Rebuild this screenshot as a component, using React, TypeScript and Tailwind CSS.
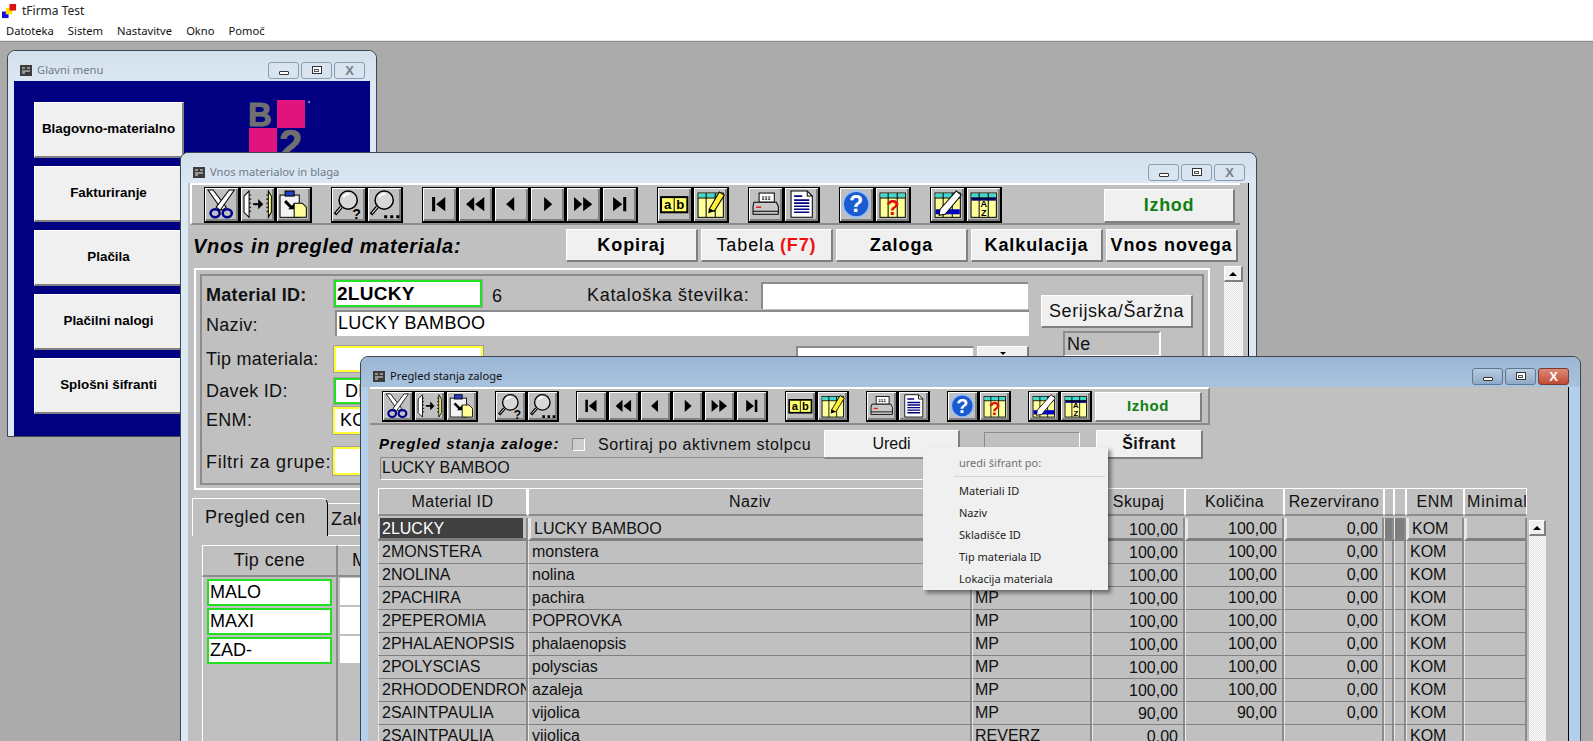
import type { ReactNode } from 'react';

const raised =
  'border-t border-l border-r-2 border-b-2 border-t-white border-l-white border-r-[#7f7f7f] border-b-[#7f7f7f] bg-[#f0f0f0]';
const track =
  'bg-[repeating-conic-gradient(#ffffff_0_25%,#e0e0e0_0_50%)] bg-[length:2px_2px]';

const Grid = ({ header = '#40d8d0', sub = false }: { header?: string; sub?: boolean }) => (
  <>
    <rect x="3" y="4" width="25" height="24" fill="#ffff99" stroke="#000" />
    <rect x="3.5" y="4.5" width="24" height="4" fill={header} />
    {sub && <rect x="3.5" y="8.5" width="24" height="3" fill="#000080" />}
    <path d="M3 9H28M11 4V28M20 4V28" stroke="#000" fill="none" />
  </>
);

const Icons: Record<string, ReactNode> = {
  cut: (
    <>
      <polygon points="2,1 7,1 20,18 16,21" fill="#fff" stroke="#000" />
      <polygon points="28,1 23,1 10,18 14,21" fill="#fff" stroke="#000" />
      <ellipse cx="9" cy="24" rx="4.5" ry="4" fill="none" stroke="#00008b" strokeWidth="2.5" />
      <ellipse cx="21" cy="24" rx="4.5" ry="4" fill="none" stroke="#00008b" strokeWidth="2.5" />
    </>
  ),
  copyTo: (
    <>
      <polygon points="2,7 7,2 7,28 2,23" fill="#fff" stroke="#000" />
      <path d="M7 6H9M7 10H9M7 14H9M7 18H9M7 22H9" stroke="#000" />
      <path d="M11 15H17" stroke="#000" strokeWidth="2" />
      <polygon points="16,10 21,15 16,20" fill="#000" />
      <polygon points="26,2 29,7 29,23 26,28" fill="#ffff80" stroke="#000" />
      <path d="M24 6H26M24 10H26M24 14H26M24 18H26M24 22H26" stroke="#000" />
    </>
  ),
  paste: (
    <>
      <rect x="2" y="6" width="19" height="22" fill="#f4f4f4" stroke="#000" />
      <rect x="7" y="2" width="9" height="5" fill="#2040c0" stroke="#000" />
      <path d="M7 12L14 19" stroke="#000" strokeWidth="3" />
      <polygon points="10,20 16,20 16,14" fill="#000" />
      <polygon points="16,14 24,14 28,18 28,28 16,28" fill="#ffff99" stroke="#000" />
    </>
  ),
  findQ: (
    <>
      <circle cx="15" cy="11" r="9" fill="#d8d8d8" stroke="#000" strokeWidth="1.5" />
      <path d="M10 8a6 6 0 0 1 6-3" stroke="#fff" strokeWidth="2" fill="none" />
      <path d="M8 18L2 25" stroke="#000" strokeWidth="3.5" />
      <path d="M8 18L3 24" stroke="#fff" />
      <text x="19" y="30" fontSize="14" fontWeight="700" fontFamily="Liberation Sans">?</text>
    </>
  ),
  findDots: (
    <>
      <circle cx="15" cy="11" r="9" fill="#d8d8d8" stroke="#000" strokeWidth="1.5" />
      <path d="M10 8a6 6 0 0 1 6-3" stroke="#fff" strokeWidth="2" fill="none" />
      <path d="M8 18L2 25" stroke="#000" strokeWidth="3.5" />
      <path d="M8 18L3 24" stroke="#fff" />
      <path d="M15 26h3v3h-3zM21 26h3v3h-3zM27 26h3v3h-3z" fill="#000" />
    </>
  ),
  first: <path d="M8 8h3v14H8zM21 8v14l-9-7z" fill="#000" />,
  prevPage: <path d="M14 8v14l-8-7zM24 8v14l-9-7z" fill="#000" />,
  prev: <path d="M18 8v14l-8-7z" fill="#000" />,
  next: <path d="M12 8v14l8-7z" fill="#000" />,
  nextPage: <path d="M6 8v14l8-7zM15 8v14l9-7z" fill="#000" />,
  last: <path d="M9 8v14l9-7zM19 8h3v14h-3z" fill="#000" />,
  ab: (
    <>
      <rect x="2" y="8" width="26" height="15" fill="#ffff66" stroke="#000" strokeWidth="2" />
      <path d="M15 8V23" stroke="#000" />
      <text x="5" y="20" fontSize="13" fontWeight="700" fontFamily="Liberation Sans">a</text>
      <text x="17" y="20" fontSize="13" fontWeight="700" fontFamily="Liberation Sans">b</text>
    </>
  ),
  tablePen: (
    <>
      <Grid />
      <polygon points="14,20 24,3 29,6 19,22" fill="#ffee33" stroke="#000" />
      <polygon points="13,24 14,19 19,22" fill="#000" />
    </>
  ),
  print: (
    <>
      <rect x="9" y="4" width="15" height="9" fill="#fff" stroke="#000" />
      <path d="M12 8h9M12 10h9" stroke="#000" strokeDasharray="2 1" />
      <path d="M4 13H26L28 17V25H3V17Z" fill="#c8c8c8" stroke="#000" />
      <path d="M6 18H11" stroke="#e02020" strokeWidth="1.5" />
      <path d="M3 22H28" stroke="#000" />
    </>
  ),
  doc: (
    <>
      <polygon points="5,2 21,2 26,7 26,28 5,28" fill="#fff" stroke="#000" />
      <path d="M21 2V7H26" stroke="#000" fill="none" />
      <path d="M8 7H16M8 11H23M8 14H23M8 17H23M8 20H23M8 23H23" stroke="#000080" strokeWidth="1.6" />
    </>
  ),
  help: (
    <>
      <circle cx="15" cy="15" r="14" fill="#9cc0f0" />
      <circle cx="15" cy="15" r="12" fill="#1a5cd0" />
      <text x="15" y="23" textAnchor="middle" fontSize="23" fontWeight="700" fill="#fff" fontFamily="Liberation Sans">?</text>
    </>
  ),
  tableHelp: (
    <>
      <Grid />
      <text x="15.5" y="26" textAnchor="middle" fontSize="22" fontWeight="700" fill="#e01010" fontFamily="Liberation Sans">?</text>
    </>
  ),
  tableEdit: (
    <>
      <Grid />
      <rect x="3.5" y="20" width="24" height="5" fill="#0000c0" />
      <polygon points="8,20 24,2 29,6 13,25 7,26" fill="#fff" stroke="#000" />
    </>
  ),
  tableSort: (
    <>
      <Grid sub />
      <text x="15.5" y="18" textAnchor="middle" fontSize="9" fontWeight="700" fontFamily="Liberation Sans">A</text>
      <text x="15.5" y="27" textAnchor="middle" fontSize="9" fontWeight="700" fontFamily="Liberation Sans">Z</text>
    </>
  ),
};

const toolGroups = [
  ['cut', 'copyTo', 'paste'],
  ['findQ', 'findDots'],
  ['first', 'prevPage', 'prev', 'next', 'nextPage', 'last'],
  ['ab', 'tablePen'],
  ['print', 'doc'],
  ['help', 'tableHelp'],
  ['tableEdit', 'tableSort'],
];

function ToolButtons({ btnClass, groupClass }: { btnClass: string; groupClass: string }) {
  return (
    <div className={`flex ${groupClass}`}>
      {toolGroups.map((group) => (
        <div key={group[0]} className="flex">
          {group.map((name) => (
            <div
              key={name}
              className={`${btnClass} flex items-center justify-center border border-r-2 border-b-2 border-black bg-[#c0c0c0] shadow-[inset_1px_1px_0_#ffffff,inset_-2px_-2px_0_#808080]`}
            >
              <svg viewBox="0 0 30 30" className="h-[92%] w-[92%]">
                {Icons[name]}
              </svg>
            </div>
          ))}
        </div>
      ))}
    </div>
  );
}

function Win({
  title,
  active = false,
  className,
  children,
}: {
  title: string;
  active?: boolean;
  className: string;
  children: ReactNode;
}) {
  return (
    <div
      className={`absolute flex flex-col rounded-t-lg border border-[#3c4650] ${
        active ? 'bg-[#b4cfeb]' : 'bg-[#dce8f4]'
      } ${className}`}
    >
      <div
        className={`flex h-[30px] shrink-0 items-center rounded-t-lg pt-[8px] pr-[11px] pl-[12px] ${
          active ? 'bg-linear-to-b from-[#9bb6d4] to-[#a9c3df]' : 'bg-linear-to-b from-[#d3dfeb] to-[#dbe7f3]'
        }`}
      >
        <svg viewBox="0 0 12 11" className="h-[11px] w-[12px]">
          <rect width="12" height="11" fill="#3c3c3c" />
          <path d="M2 3h3M7 3h3M2 6h8M2 8h3" stroke="#e8e8e8" />
        </svg>
        <span
          className={`ml-[5px] font-['Noto_Sans',sans-serif] text-[11.2px] ${
            active ? 'text-[#111111]' : 'text-[#707c88]'
          }`}
        >
          {title}
        </span>
        <div className="ml-auto flex gap-[2px]">
          {['min', 'max', 'close'].map((b) => (
            <div
              key={b}
              className={`flex h-[17px] w-[31px] items-center justify-center rounded-[3px] border ${
                !active
                  ? 'border-[#8c9caf] bg-[#d8e4f0]'
                  : b === 'close'
                    ? 'border-[#7a3a30] bg-linear-to-b from-[#dc8a78] to-[#c04a36]'
                    : 'border-[#5f7690] bg-linear-to-b from-[#b8cde2] to-[#8fa9c6]'
              }`}
            >
              {b === 'min' && <div className="mt-[5px] h-[4px] w-[10px] rounded-[1px] border border-[#333333] bg-white" />}
              {b === 'max' && (
                <div className="flex h-[8px] w-[10px] items-center justify-center border border-[#333333] bg-white">
                  <div className="h-[3px] w-[5px] border border-[#555555]" />
                </div>
              )}
              {b === 'close' && (
                <span className={`font-['Liberation_Sans',sans-serif] text-[13px] leading-none font-bold ${active ? 'text-white' : 'text-[#76818d]'}`}>
                  X
                </span>
              )}
            </div>
          ))}
        </div>
      </div>
      {children}
    </div>
  );
}

function ScrollUp({ className }: { className: string }) {
  return (
    <div className={`${className} ${track} flex flex-col`}>
      <div className={`flex h-[16px] shrink-0 items-center justify-center ${raised}`}>
        <div className="h-0 w-0 border-x-[4px] border-b-[4px] border-x-transparent border-b-black" />
      </div>
    </div>
  );
}

const greenInput = 'border-2 border-[#22e022] bg-white outline outline-[#a0a0a0]';
const yellowInput = 'border-2 border-[#ffff33] bg-white outline outline-[#a0a0a0]';
const plainInput = 'border-t-2 border-l-2 border-[#8c8c8c] bg-white';

function VnosWindow() {
  return (
    <Win title="Vnos materialov in blaga" className="top-[110px] left-[180px] h-[640px] w-[1077px]">
      <div className="mx-[7px] flex h-[589px] flex-col overflow-hidden border-r border-r-black bg-[#c0c0c0]">
        <div className="ml-[2px] flex h-[42px] w-[1050px] shrink-0 items-start border-t-2 border-b-2 border-l-2 border-t-white border-b-[#8c8c8c] border-l-white pt-[2px] pl-[12px]">
          <ToolButtons btnClass="h-[36px] w-[36px]" groupClass="gap-[19px]" />
          <div className={`mt-[2px] ml-[102px] flex h-[34px] w-[131px] items-center justify-center text-[18px] font-bold tracking-[0.7px] text-[#108010] ${raised}`}>
            Izhod
          </div>
        </div>

        <div className="mt-[4px] flex h-[33px] shrink-0 items-center pl-[5px]">
          <div className="w-[373px] text-[20px] font-bold italic tracking-[0.7px] text-black">
            Vnos in pregled materiala:
          </div>
          <div className="flex gap-[3px]">
            {['Kopiraj', 'Tabela', 'Zaloga', 'Kalkulacija', 'Vnos novega'].map((label) => (
              <div
                key={label}
                className={`flex h-[33px] w-[132px] items-center justify-center text-[18px] tracking-[0.9px] text-black ${raised} ${
                  label === 'Tabela' ? 'font-normal' : 'font-bold'
                }`}
              >
                {label}
                {label === 'Tabela' && <b className="ml-[5px] text-[#f01010]">(F7)</b>}
              </div>
            ))}
          </div>
        </div>

        <div className="mt-[4px] flex min-h-0 flex-1">
          <div className="flex w-[1036px] shrink-0 flex-col">
            <div className="mt-[2px] ml-[6px] h-[222px] w-[1016px] shrink-0 border-2 border-white px-[4px] pt-[4px] pb-[1px]">
              <div className="flex h-[211px] border-2 border-[#8c8c8c] pt-[4px] pl-[4px] text-[18px] tracking-[0.3px] text-[#111111]">
                <div className="flex w-[826px] shrink-0 flex-col">
                  <div className="flex h-[30px] shrink-0 items-start">
                    <span className="mt-[2px] w-[128px] font-bold">Material ID:</span>
                    <div className={`h-[27px] w-[148px] pl-[1px] text-[19px] leading-[23px] font-bold text-black ${greenInput}`}>2LUCKY</div>
                    <span className="mt-[3px] ml-[10px] w-[95px]">6</span>
                    <span className="mt-[2px] w-[174px] tracking-[0.7px]">Kataloška številka:</span>
                    <div className={`mt-[2px] h-[27px] w-[267px] ${plainInput}`} />
                  </div>
                  <div className="flex h-[26px] shrink-0 items-start">
                    <span className="mt-[2px] w-[129px]">Naziv:</span>
                    <div className={`h-[26px] w-[694px] pl-[1px] text-[18px] leading-[22px] text-black ${plainInput}`}>LUCKY BAMBOO</div>
                  </div>
                  <div className="mt-[10px] flex h-[26px] shrink-0 items-start">
                    <span className="w-[128px]">Tip materiala:</span>
                    <div className={`h-[26px] w-[149px] ${yellowInput}`} />
                    <div className={`ml-[313px] h-[26px] w-[177px] ${plainInput}`} />
                    <div className={`ml-[4px] flex h-[26px] w-[52px] justify-center ${raised}`}>
                      <div className="mt-[5px] h-0 w-0 border-x-[3px] border-t-[3px] border-x-transparent border-t-black" />
                    </div>
                  </div>
                  <div className="mt-[6px] flex h-[26px] shrink-0 items-start">
                    <span className="w-[128px]">Davek ID:</span>
                    <div className={`h-[26px] w-[149px] pl-[9px] leading-[22px] text-black ${greenInput}`}>DDV</div>
                  </div>
                  <div className="mt-[3px] flex h-[27px] shrink-0 items-start">
                    <span className="w-[127px]">ENM:</span>
                    <div className={`h-[27px] w-[149px] pl-[5px] leading-[23px] text-black ${yellowInput}`}>KOM</div>
                  </div>
                  <div className="mt-[13px] flex h-[28px] shrink-0 items-start">
                    <span className="mt-[2px] w-[127px] tracking-[0.7px]">Filtri za grupe:</span>
                    <div className={`h-[28px] w-[149px] ${yellowInput}`} />
                  </div>
                </div>
                <div className="ml-[9px] flex flex-col">
                  <div className={`mt-[15px] flex h-[33px] w-[152px] items-center justify-center tracking-[0.6px] ${raised}`}>Serijska/Šaržna</div>
                  <div className="mt-[3px] ml-[22px] h-[26px] w-[98px] border-t-2 border-r-2 border-b-2 border-l-2 border-t-[#8c8c8c] border-r-white border-b-white border-l-[#8c8c8c] pl-[2px] leading-[22px]">
                    Ne
                  </div>
                </div>
              </div>
            </div>

            <div className="mt-[8px] flex h-[38px] shrink-0 items-end pl-[4px] text-[18px] tracking-[0.4px] text-[#111111]">
              <div className="flex h-[38px] w-[136px] items-center rounded-tr-md border-t border-r border-l border-t-white border-r-black border-l-white pl-[12px]">
                Pregled cen
              </div>
              <div className="flex h-[33px] w-[200px] items-center border-t border-b border-white pl-[3px]">Zaloge</div>
            </div>

            <div className="mt-[9px] ml-[14px] grid grid-cols-[136px_200px] text-[18px] text-[#111111]">
              <div className="flex h-[32px] items-center justify-center border-t border-r-2 border-b-2 border-l border-t-white border-r-[#8c8c8c] border-b-[#8c8c8c] border-l-white tracking-[0.4px]">
                Tip cene
              </div>
              <div className="flex h-[32px] items-center border-t border-b-2 border-t-white border-b-[#8c8c8c] pl-[14px]">Marža</div>
              <div className="flex h-[170px] flex-col gap-[2px] border-r-2 border-l border-r-[#8c8c8c] border-l-white pt-[2px] pl-[4px]">
                {['MALO', 'MAXI', 'ZAD-'].map((t) => (
                  <div key={t} className="h-[27px] w-[125px] border-2 border-[#22e022] bg-white pl-[1px] leading-[22px] text-black">
                    {t}
                  </div>
                ))}
              </div>
              <div className="flex flex-col gap-[2px] pt-[1px] pl-[2px]">
                {[0, 1, 2].map((i) => (
                  <div key={i} className="h-[27px] w-[120px] bg-white" />
                ))}
              </div>
            </div>
          </div>
          <ScrollUp className="h-[470px] w-[19px]" />
        </div>
      </div>
    </Win>
  );
}

const rows: [string, string, string, string, string, string][] = [
  ['2LUCKY', 'LUCKY BAMBOO', 'MP', '100,00', '100,00', '0,00'],
  ['2MONSTERA', 'monstera', 'MP', '100,00', '100,00', '0,00'],
  ['2NOLINA', 'nolina', 'MP', '100,00', '100,00', '0,00'],
  ['2PACHIRA', 'pachira', 'MP', '100,00', '100,00', '0,00'],
  ['2PEPEROMIA', 'POPROVKA', 'MP', '100,00', '100,00', '0,00'],
  ['2PHALAENOPSIS', 'phalaenopsis', 'MP', '100,00', '100,00', '0,00'],
  ['2POLYSCIAS', 'polyscias', 'MP', '100,00', '100,00', '0,00'],
  ['2RHODODENDRON', 'azaleja', 'MP', '100,00', '100,00', '0,00'],
  ['2SAINTPAULIA', 'vijolica', 'MP', '90,00', '90,00', '0,00'],
  ['2SAINTPAULIA', 'vijolica', 'REVERZ', '0,00', '', ''],
];

const headCell =
  'flex h-[28px] items-center justify-center overflow-hidden whitespace-nowrap border-t border-t-white border-l border-l-white border-r border-r-white border-b-2 border-b-[#8c8c8c]';
const headers = ['Material ID', 'Naziv', '', 'Skupaj', 'Količina', 'Rezervirano', '', '', 'ENM', 'Minimalna'];

function Cell({ first, className, children }: { first: boolean; className: string; children?: ReactNode }) {
  return (
    <div
      className={`h-[23px] overflow-hidden whitespace-nowrap border-r-2 border-r-[#8c8c8c] border-l border-l-[#e8e8e8] leading-[21px] ${
        first ? 'border-b-[3px] border-b-[#7f7f7f]' : 'border-b border-b-[#808080]'
      } ${className}`}
    >
      {children}
    </div>
  );
}

function StockTable() {
  return (
    <div className="grid w-[1149px] shrink-0 grid-cols-[150px_444px_120px_93px_99px_100px_10px_12px_58px_63px] content-start text-[16px] text-[#111111]">
      {headers.map((h, i) => (
        <div
          key={`${h}${i}`}
          className={`${headCell} ${i === 0 ? 'border-r-2 border-r-[#8c8c8c]' : ''} ${i === 9 ? 'justify-start pl-[2px] tracking-[0.8px]' : 'tracking-[0.4px]'}`}
        >
          {h}
        </div>
      ))}
      <div className="col-span-10 h-[2px]" />
      {rows.map((r, n) => {
        const first = n === 0;
        return (
          <div key={`${r[0]}${n}`} className="contents">
            <Cell first={first} className="pl-[1px]">
              <div className={first ? 'mr-[3px] h-[21px] bg-[#404040] text-white' : ''}>
                <span className="pl-[2px]">{r[0]}</span>
              </div>
            </Cell>
            <Cell first={first} className={`pl-[3px] ${first ? 'border-l-[3px] border-l-[#7f7f7f]' : ''}`}>{r[1]}</Cell>
            <Cell first={first} className="pl-[2px]">{r[2]}</Cell>
            <Cell first={first} className={`pt-[1px] pr-[5px] text-right ${first ? 'border-l-[3px] border-l-[#7f7f7f]' : ''}`}>{r[3]}</Cell>
            <Cell first={first} className={`pr-[5px] text-right ${first ? 'border-l-[3px] border-l-[#7f7f7f]' : ''}`}>{r[4]}</Cell>
            <Cell first={first} className={`pr-[4px] text-right ${first ? 'border-l-[3px] border-l-[#7f7f7f]' : ''}`}>{r[5]}</Cell>
            <Cell first={first} className={first ? 'bg-[#7f7f7f]' : ''} />
            <Cell first={first} className={first ? 'bg-[#7f7f7f]' : ''} />
            <Cell first={first} className={`pl-[3px] ${first ? 'border-l-[3px] border-l-[#7f7f7f]' : ''}`}>KOM</Cell>
            <Cell first={first} className={first ? 'border-l-[3px] border-l-[#7f7f7f]' : ''} />
          </div>
        );
      })}
    </div>
  );
}

function PregledWindow() {
  return (
    <Win active title="Pregled stanja zaloge" className="top-[314px] left-[360px] h-[440px] w-[1221px]">
      <div className="mr-[11px] ml-[7px] flex flex-1 flex-col overflow-hidden border-r border-r-black bg-[#c0c0c0]">
        <div className="ml-[2px] flex h-[38px] w-[840px] shrink-0 items-start border-t-2 border-r-2 border-b-2 border-t-white border-r-[#8c8c8c] border-b-[#8c8c8c] pt-[2px] pl-[12px]">
          <ToolButtons btnClass="h-[31px] w-[32px]" groupClass="gap-[17px]" />
          <div className={`mt-[1px] ml-[3px] flex h-[30px] w-[107px] items-center justify-center text-[15px] font-bold tracking-[0.6px] text-[#108010] ${raised}`}>
            Izhod
          </div>
        </div>

        <div className="mt-[5px] flex h-[29px] shrink-0 items-center pl-[11px] text-[16px] text-[#111111]">
          <span className="w-[193px] text-[15px] font-bold italic tracking-[1px] text-black">Pregled stanja zaloge:</span>
          <div className="h-[13px] w-[13px] border border-t-[#8c8c8c] border-r-white border-b-white border-l-[#8c8c8c] bg-[#cccccc]" />
          <span className="ml-[13px] w-[226px] tracking-[0.6px]">Sortiraj po aktivnem stolpcu</span>
          <div className={`flex h-[29px] w-[136px] items-center justify-center ${raised}`}>Uredi</div>
          <div className="mt-[-2px] ml-[24px] h-[23px] w-[96px] border border-[#8c8c8c] border-r-white border-b-white" />
          <div className={`ml-[16px] flex h-[29px] w-[107px] items-center justify-center font-bold tracking-[0.4px] ${raised}`}>Šifrant</div>
        </div>

        <div className="mt-[-2px] ml-[12px] h-[23px] w-[712px] shrink-0 border-t border-b border-l border-t-[#8c8c8c] border-b-white border-l-[#8c8c8c] pl-[1px] text-[16px] leading-[19px] text-[#111111]">
          LUCKY BAMBOO
        </div>

        <div className="mt-[8px] ml-[10px] flex min-h-0 flex-1">
          <StockTable />
          <ScrollUp className="mt-[32px] ml-[2px] h-[300px] w-[17px]" />
        </div>
      </div>
    </Win>
  );
}

function GlavniWindow() {
  return (
    <Win title="Glavni menu" className="top-[8px] left-[7px] h-[387px] w-[370px]">
      <div className="mx-[6px] flex flex-1 bg-[#000080] pt-[21px] pl-[20px]">
        <div className="flex flex-col gap-[8px]">
          {['Blagovno-materialno', 'Fakturiranje', 'Plačila', 'Plačilni nalogi', 'Splošni šifranti'].map((label) => (
            <div key={label} className={`flex h-[56px] w-[150px] items-center justify-center text-[13.4px] font-bold text-black ${raised}`}>
              {label}
            </div>
          ))}
        </div>
        <svg viewBox="0 0 64 64" className="mt-[-2px] ml-[65px] h-[64px] w-[64px]">
          <rect x="28" y="0" width="28" height="28" fill="#e0147c" />
          <rect x="0" y="28" width="28" height="28" fill="#e0147c" />
          <circle cx="60" cy="2" r="1.2" fill="#8080c0" />
          <text x="-1" y="26" fontSize="33" fontWeight="700" fill="#707070" stroke="#707070" strokeWidth="1" fontFamily="Liberation Sans">B</text>
          <text x="30" y="59" fontSize="42" fontWeight="700" fill="#707070" stroke="#707070" strokeWidth="0.6" fontFamily="Liberation Sans">2</text>
        </svg>
      </div>
    </Win>
  );
}

export default function App() {
  return (
    <div className="flex h-screen flex-col overflow-hidden bg-white font-['Liberation_Sans',Arial,sans-serif]">
      <div className="flex h-[22px] shrink-0 items-center pl-[2px] font-['Noto_Sans',sans-serif] text-[12px] text-[#222222]">
        <svg viewBox="0 0 16 16" className="h-[15px] w-[15px]">
          <rect x="0" y="8" width="7" height="7" fill="#1010e0" />
          <rect x="4" y="4" width="7" height="7" fill="#ffe000" />
          <rect x="8" y="0" width="7" height="7" fill="#e01010" />
        </svg>
        <span className="ml-[5px]">tFirma Test</span>
      </div>
      <div className="flex h-[19px] shrink-0 items-center gap-[14px] border-b border-[#e8e8e8] pl-[6px] font-['Noto_Sans',sans-serif] text-[11.2px] text-[#111111]">
        {['Datoteka', 'Sistem', 'Nastavitve', 'Okno', 'Pomoč'].map((m) => (
          <span key={m}>{m}</span>
        ))}
      </div>
      <div className="relative flex-1 border-t border-[#8c8c8c] bg-[#ababab]">
        <GlavniWindow />
        <VnosWindow />
        <PregledWindow />
        <div className="absolute top-[405px] left-[923px] flex h-[143px] w-[185px] flex-col bg-[#f0f0f0] pt-[5px] pl-[36px] font-['Noto_Sans',sans-serif] text-[11px] text-[#222222] shadow-[3px_3px_4px_rgba(0,0,0,0.45)]">
          <div className="flex h-[22px] items-center text-[#707070]">uredi šifrant po:</div>
          <div className="mt-[2px] mb-[3px] -ml-[5px] h-px w-[151px] bg-[#d4d4d4]" />
          {['Materiali ID', 'Naziv', 'Skladišče ID', 'Tip materiala ID', 'Lokacija materiala'].map((m) => (
            <div key={m} className="flex h-[22px] items-center">
              {m}
            </div>
          ))}
        </div>
      </div>
    </div>
  );
}
